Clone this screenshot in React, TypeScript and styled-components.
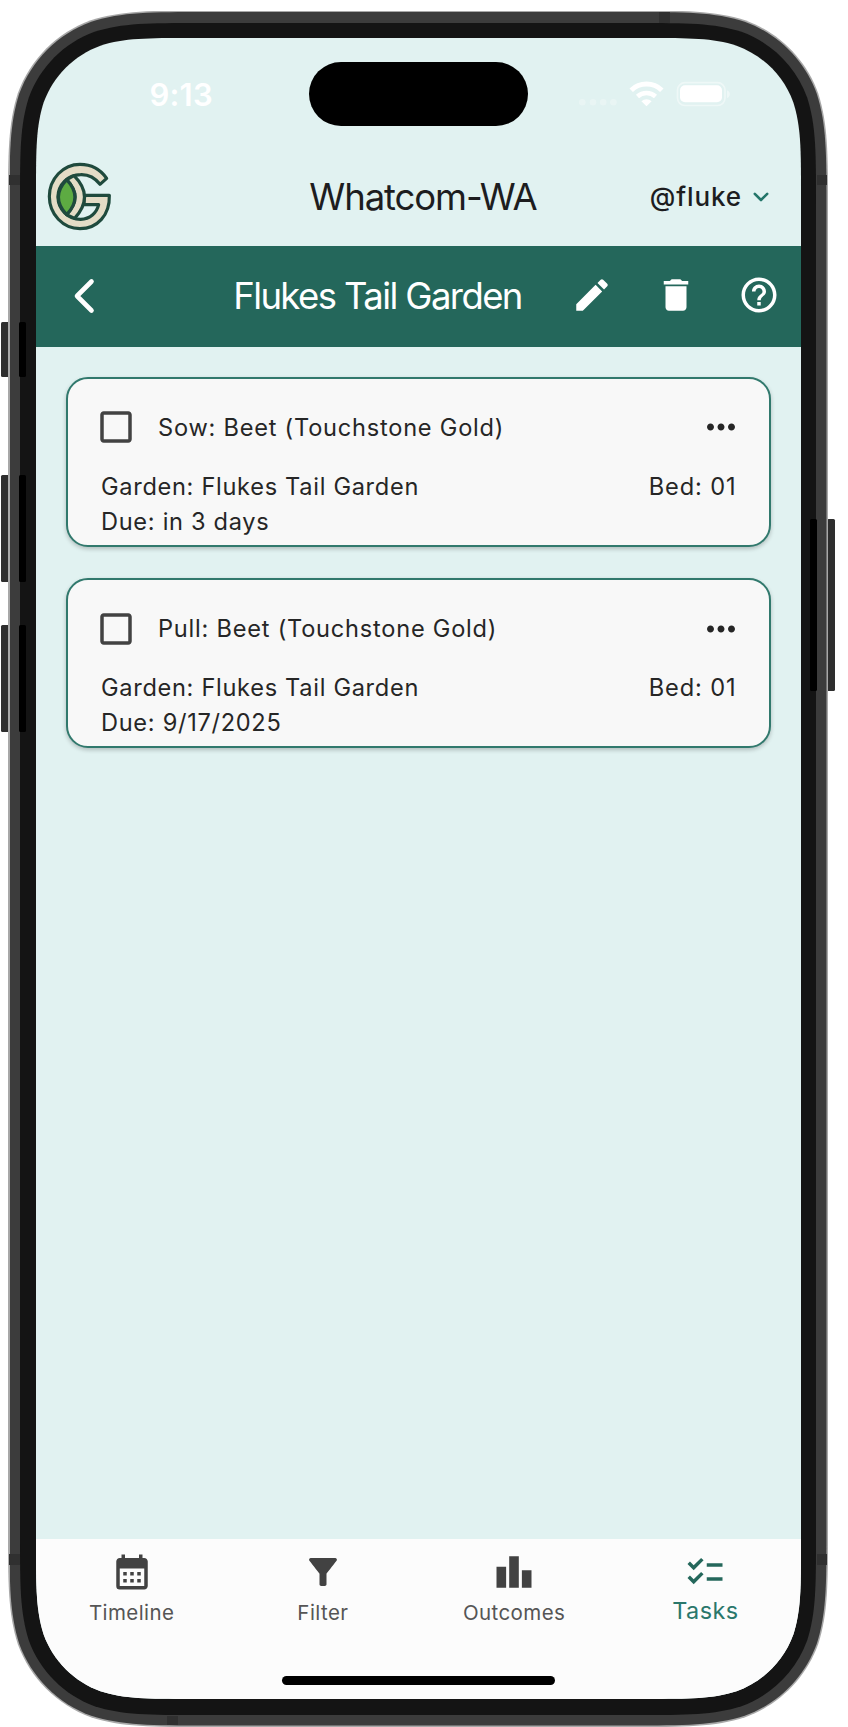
import React from "react";
import styled, { createGlobalStyle, css } from "styled-components";
import {
  MdCalendarMonth,
  MdCheckBoxOutlineBlank,
  MdChecklist,
  MdDelete,
  MdEdit,
  MdFilterAlt,
  MdHelpOutline,
  MdLeaderboard,
  MdMoreHoriz,
} from "react-icons/md";
import type { IconType } from "react-icons";

/* Continuous-curvature rounded rectangle, as used for phone bezels. */
const squircle = (w: number, h: number, r: number) => {
  const a = 1.528665 * r;
  const b = 1.08849296 * r;
  const c = 0.86840694 * r;
  const d = 0.63149379 * r;
  const e = 0.07491139 * r;
  const f = 0.37282383 * r;
  const g = 0.16905956 * r;
  return [
    `M${a} 0H${w - a}`,
    `C${w - b} 0 ${w - c} 0 ${w - d} ${e}`,
    `C${w - f} ${g} ${w - g} ${f} ${w - e} ${d}`,
    `C${w} ${c} ${w} ${b} ${w} ${a}`,
    `V${h - a}`,
    `C${w} ${h - b} ${w} ${h - c} ${w - e} ${h - d}`,
    `C${w - g} ${h - f} ${w - f} ${h - g} ${w - d} ${h - e}`,
    `C${w - c} ${h} ${w - b} ${h} ${w - a} ${h}`,
    `H${a}`,
    `C${b} ${h} ${c} ${h} ${d} ${h - e}`,
    `C${f} ${h - g} ${g} ${h - f} ${e} ${h - d}`,
    `C0 ${h - c} 0 ${h - b} 0 ${h - a}`,
    `V${a}`,
    `C0 ${b} 0 ${c} ${e} ${d}`,
    `C${g} ${f} ${f} ${g} ${d} ${e}`,
    `C${c} 0 ${b} 0 ${a} 0Z`,
  ].join("");
};

const teal = "#24675b";
const mint = "#e1f2f1";

const GlobalStyle = createGlobalStyle`
  * { box-sizing: border-box; }
  body { margin: 0; background: #fff; overflow: hidden; }
`;

const Page = styled.div`
  position: relative;
  width: 848px;
  height: 1727px;
  padding: 10.5px 0 0 8px;
  overflow: hidden;
  font-family: Inter, "Liberation Sans", sans-serif;
  color: #1d1d1f;
`;

const shell = (w: number, h: number, r: number) => css`
  width: ${w}px;
  height: ${h}px;
  clip-path: path("${squircle(w, h, r)}");
`;

const Edge = styled.div`
  ${shell(820, 1716.5, 131)}
  background: #a8a8a8;
  padding: 1.5px;
`;

const Body = styled.div`
  ${shell(817, 1713.5, 129.5)}
  background: #3c3c3c;
  padding: 11px 0 0 10.5px;
`;

const Bezel = styled.div`
  ${shell(796, 1692, 118)}
  background: #141414;
  padding: 15px 0 0 16px;
`;

const Screen = styled.div`
  ${shell(765, 1661, 102)}
  display: flex;
  flex-direction: column;
  background: ${mint};
`;

const Button = styled.span<{ $x: number; $y: number; $w: number; $h: number; $shade?: boolean }>`
  position: absolute;
  left: ${(p) => p.$x}px;
  top: ${(p) => p.$y}px;
  width: ${(p) => p.$w}px;
  height: ${(p) => p.$h}px;
  background: ${(p) => (p.$shade ? "#000" : "#2e2e2e")};
  border-radius: 1.5px;
`;

const Antenna = styled.span<{ $x: number; $y: number; $w: number; $h: number }>`
  position: absolute;
  left: ${(p) => p.$x}px;
  top: ${(p) => p.$y}px;
  width: ${(p) => p.$w}px;
  height: ${(p) => p.$h}px;
  background: #303030;
`;

const StatusBar = styled.header`
  display: grid;
  grid-template-columns: 273px 219px 1fr;
  height: 112px;
  padding-top: 24px;
  color: #fff;
`;

const Time = styled.span`
  height: 64px;
  padding-left: 113.5px;
  font-size: 31px;
  font-weight: 600;
  line-height: 65px;
  letter-spacing: 0.2px;
`;

const Island = styled.div`
  height: 64px;
  border-radius: 32px;
  background: #000;
`;

const Signals = styled.svg`
  display: block;
  width: 170px;
  height: 64px;
  margin-left: 40px;
`;

const AppBar = styled.div`
  display: grid;
  grid-template-columns: 225px 1fr 216px;
  align-items: center;
  height: 96px;
`;

const Logo = styled.svg`
  display: block;
  width: 72px;
  height: 76px;
  margin: -2px 0 0 8px;
`;

const Heading = styled.h1<{ $tight?: boolean }>`
  margin: -2px 0 0;
  text-align: center;
  white-space: nowrap;
  font-size: 36.5px;
  font-weight: 400;
  line-height: 44px;
  letter-spacing: ${(p) => (p.$tight ? -1.6 : -1.1)}px;
`;

const Account = styled.div`
  display: flex;
  align-items: center;
  justify-content: flex-end;
  gap: 11px;
  margin-top: -2px;
  padding-right: 32px;
  font-size: 26px;
  font-weight: 450;
  line-height: 32px;
  letter-spacing: 0.9px;
  color: #1d1d1f;
`;

const GardenBar = styled.div`
  display: grid;
  grid-template-columns: 179px 1fr 261px;
  align-items: center;
  height: 101.4px;
  background: ${teal};
  color: #fff;
`;

const Back = styled.svg`
  display: block;
  width: 24px;
  height: 38px;
  margin: -2px 0 0 36px;
`;

const Actions = styled.div`
  display: flex;
  justify-content: space-between;
  align-items: center;
  width: 209px;
  margin: -3px 0 0 31px;
`;

const TaskList = styled.main`
  display: flex;
  flex: 1;
  flex-direction: column;
  gap: 31.3px;
  padding: 29.6px 30px 0;
`;

const Card = styled.article`
  height: 170px;
  padding: 27px 32px 0 27px;
  border: 2px solid #31796d;
  border-radius: 22px;
  background: #f8f8f8;
  box-shadow: 0 2px 4px rgba(0, 0, 0, 0.22);
  font-size: 23.6px;
  line-height: 35px;
  letter-spacing: 0.69px;
  color: #262626;
`;

const CardTop = styled.div`
  display: flex;
  align-items: center;
  height: 43px;
  margin-bottom: 20.2px;
  & > svg { flex: none; }
`;

const TaskName = styled.span`
  flex: 1;
  padding-left: 21px;
  letter-spacing: 0.77px;
`;

const More = styled(MdMoreHoriz)`
  margin-right: -5px;
`;

const Details = styled.div`
  display: flex;
  justify-content: space-between;
  padding: 0 0.5px 0 6px;
`;

const Bed = styled.div`
  letter-spacing: 0.9px;
`;

const TabBar = styled.nav`
  display: grid;
  grid-template-columns: repeat(4, 1fr);
  grid-template-rows: 137px 9px;
  height: 160px;
  background: #fcfcfc;
`;

const Tab = styled.div<{ $active?: boolean }>`
  display: flex;
  flex-direction: column;
  align-items: center;
  padding-top: 12px;
  color: ${(p) => (p.$active ? teal : "#424242")};
`;

const TabLabel = styled.span<{ $active?: boolean }>`
  margin-top: ${(p) => (p.$active ? 3 : 5)}px;
  font-size: ${(p) => (p.$active ? 23.4 : 20.5)}px;
  line-height: 30px;
  letter-spacing: 0.42px;
  color: ${(p) => (p.$active ? "#2a776b" : "#555")};
`;

const HomeIndicator = styled.div`
  grid-column: 1 / -1;
  justify-self: center;
  width: 273px;
  height: 9px;
  border-radius: 5px;
  background: #000;
`;

const tasks = [
  { name: "Sow: Beet (Touchstone Gold)", garden: "Flukes Tail Garden", due: "in 3 days", bed: "01" },
  { name: "Pull: Beet (Touchstone Gold)", garden: "Flukes Tail Garden", due: "9/17/2025", bed: "01" },
];

const tabs: { label: string; Icon: IconType; active?: boolean }[] = [
  { label: "Timeline", Icon: MdCalendarMonth },
  { label: "Filter", Icon: MdFilterAlt },
  { label: "Outcomes", Icon: MdLeaderboard },
  { label: "Tasks", Icon: MdChecklist, active: true },
];

const sideButtons = [
  { y: 322, h: 55 },
  { y: 474.5, h: 107.5 },
  { y: 624.5, h: 107.5 },
];

const antennas = [
  [9, 175, 11, 10],
  [817, 175, 10, 10],
  [9, 1554, 11, 11],
  [817, 1554, 10, 11],
  [658.5, 12, 11, 11],
  [167, 1716, 11, 9],
];

const StatusIcons = () => (
  <Signals viewBox="568 62 170 64">
    <g fill="#fff" opacity="0.28">
      <circle cx="582.3" cy="102.3" r="3.3" />
      <circle cx="593" cy="102.3" r="3.3" />
      <circle cx="603.2" cy="102.3" r="3.3" />
      <circle cx="613.4" cy="102.3" r="3.3" />
    </g>
    <g fill="none" stroke="#fff" strokeWidth="5">
      <path d="M631.2 90.2a22 22 0 0 1 30.6 0" />
      <path d="M637.5 96.5a13.5 13.5 0 0 1 18 0" strokeWidth="4.6" />
    </g>
    <path d="M641.4 101.2a8 8 0 0 1 10.2 0L646.5 106.3z" fill="#fff" />
    <rect x="677.5" y="82.6" width="47.5" height="22.9" rx="7.5" fill="none" stroke="#fff" strokeWidth="1.7" opacity="0.45" />
    <path d="M727 90.2c3.8 1.2 3.8 6.6 0 7.8z" fill="#fff" opacity="0.45" />
    <rect x="680" y="85.3" width="42" height="17" rx="5" fill="#fff" />
  </Signals>
);

const BrandMark = () => (
  <Logo viewBox="0 0 216 228" fill="#e4dcc6" stroke="#1f4a3d" strokeWidth="9.5" strokeLinejoin="round">
    <path d="M188 58C170 32 142 16 108 16A92 96.5 0 0 0 108 209C160 209 198 168 196 109H120V137H164C158 162 138 180 110 181A68 67 0 0 1 110 47C134 46 154 58 168 76Z" />
    <path d="M68 62 90 50Q152 112 92 178L68 167Q118 115 68 62Z" />
    <path d="M68 62Q118 115 68 167Q18 115 68 62Z" fill="#5dab42" />
  </Logo>
);

export default function App() {
  return (
    <>
      <GlobalStyle />
      <Page>
        {sideButtons.map((b) => (
          <Button key={b.y} $x={0.5} $y={b.y} $w={9} $h={b.h} />
        ))}
        <Button $x={827} $y={518.5} $w={8} $h={172.5} />
        <Edge>
          <Body>
            <Bezel>
              <Screen>
                <StatusBar>
                  <Time>9:13</Time>
                  <Island />
                  <StatusIcons />
                </StatusBar>
                <AppBar>
                  <BrandMark />
                  <Heading>Whatcom-WA</Heading>
                  <Account>
                    @fluke
                    <svg width="16" height="10" viewBox="0 0 16 10" fill="none" stroke="#24766a" strokeWidth="2.6" strokeLinecap="round" strokeLinejoin="round">
                      <path d="M1.8 1.8 8 8 14.2 1.8" />
                    </svg>
                  </Account>
                </AppBar>
                <GardenBar>
                  <Back viewBox="0 0 24 38" fill="none" stroke="#fff" strokeWidth="4.6" strokeLinecap="round" strokeLinejoin="round">
                    <path d="M19.5 4.5 5 19 19.5 33.5" />
                  </Back>
                  <Heading as="h2" $tight>Flukes Tail Garden</Heading>
                  <Actions>
                    <MdEdit size={42} />
                    <MdDelete size={42} />
                    <MdHelpOutline size={42} />
                  </Actions>
                </GardenBar>
                <TaskList>
                  {tasks.map((t) => (
                    <Card key={t.name}>
                      <CardTop>
                        <MdCheckBoxOutlineBlank size={42} color="#424242" />
                        <TaskName>{t.name}</TaskName>
                        <More size={42} />
                      </CardTop>
                      <Details>
                        <div>
                          Garden: {t.garden}
                          <br />
                          Due: {t.due}
                        </div>
                        <Bed>Bed: {t.bed}</Bed>
                      </Details>
                    </Card>
                  ))}
                </TaskList>
                <TabBar>
                  {tabs.map(({ label, Icon, active }) => (
                    <Tab key={label} $active={active}>
                      <Icon size={42} />
                      <TabLabel $active={active}>{label}</TabLabel>
                    </Tab>
                  ))}
                  <HomeIndicator />
                </TabBar>
              </Screen>
            </Bezel>
          </Body>
        </Edge>
        {sideButtons.map((b) => (
          <Button key={b.y} $x={19} $y={b.y} $w={6.5} $h={b.h} $shade />
        ))}
        <Button $x={810} $y={518.5} $w={6.5} $h={172.5} $shade />
        {antennas.map(([x, y, w, h]) => (
          <Antenna key={`${x}-${y}`} $x={x} $y={y} $w={w} $h={h} />
        ))}
      </Page>
    </>
  );
}
